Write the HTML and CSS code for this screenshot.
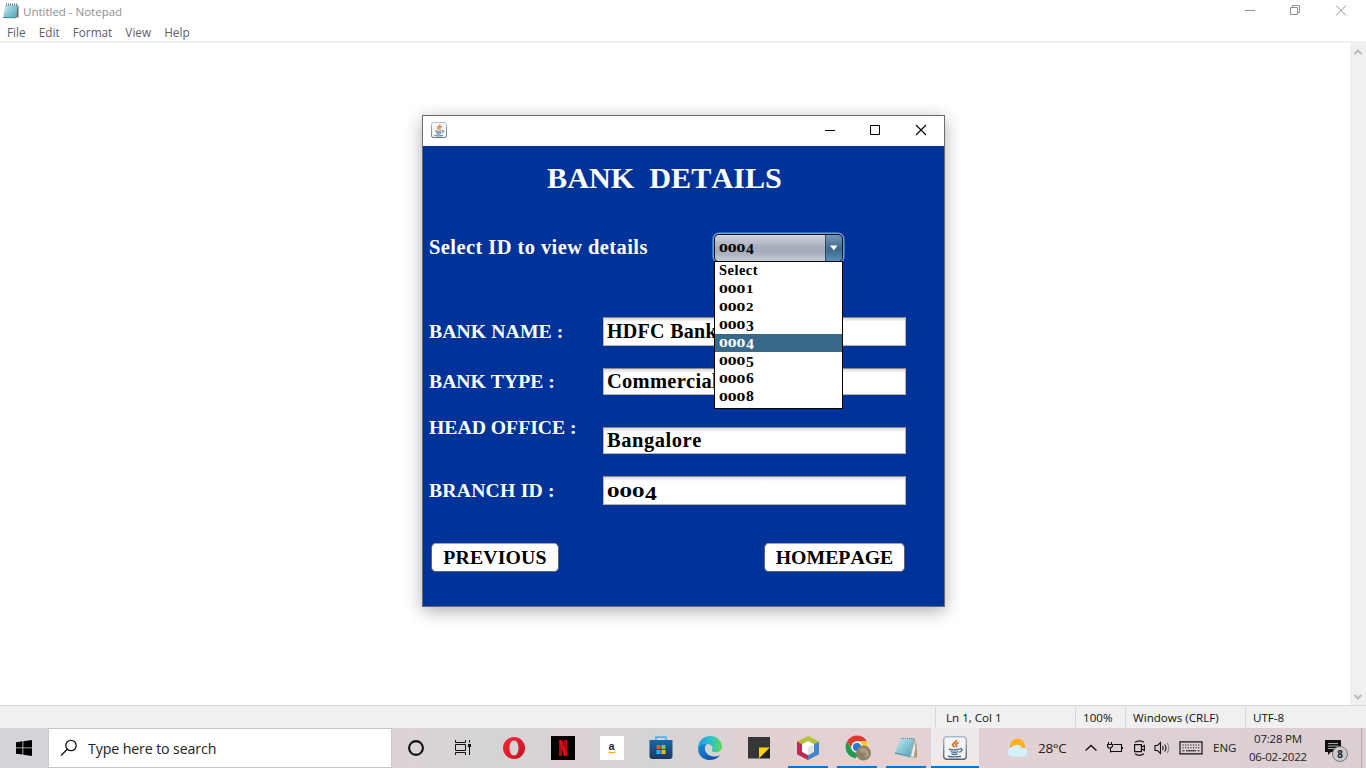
FILE: index.html
```
<!DOCTYPE html>
<html lang="en">
<head>
<meta charset="utf-8">
<title>Untitled - Notepad</title>
<link rel="stylesheet" href="styles.css">
</head>
<body>
<svg width="0" height="0" class="defs">
  <defs>
    <linearGradient id="pad" x1="0" y1="0" x2="1" y2="1"><stop offset="0" stop-color="#c9eaf0"/><stop offset="1" stop-color="#4ea3b8"/></linearGradient>
    <linearGradient id="frame" x1="0" y1="0" x2="0" y2="1"><stop offset="0" stop-color="#a9bccb"/><stop offset="1" stop-color="#4a6478"/></linearGradient>
    <linearGradient id="edgeA" x1="0" y1="0" x2="1" y2="0"><stop offset="0" stop-color="#1b9de2"/><stop offset=".55" stop-color="#2fc2c8"/><stop offset="1" stop-color="#62d84e"/></linearGradient>
    <linearGradient id="edgeB" x1="0" y1="0" x2="1" y2="1"><stop offset="0" stop-color="#1b8fdc"/><stop offset="1" stop-color="#0c4a9c"/></linearGradient>
    <linearGradient id="store" x1="0" y1="0" x2="0" y2="1"><stop offset="0" stop-color="#1767a8"/><stop offset="1" stop-color="#1c3766"/></linearGradient>
    <linearGradient id="opera" x1="0" y1="0" x2="1" y2="1"><stop offset="0" stop-color="#ff2a3c"/><stop offset="1" stop-color="#c00f20"/></linearGradient>
    <symbol id="java" viewBox="0 0 24 24">
      <rect x=".7" y=".7" width="22.6" height="22.6" rx="3" fill="#f4f5f6" stroke="url(#frame)" stroke-width="1.4"/>
      <path d="M13.200 4c1.300 2.300-4.600 3-3.400 5.300.5.900 1.300 1.100 1.700 2M16 6.500c-2.500.8-3.800 1.900-2.600 3 .7.700.2 1.300-.5 1.800" fill="none" stroke="#e8702a" stroke-width="1.800"/>
      <path d="M6 13.200q5 1.300 9.800 0M7.500 15.700q4 1.200 8 0M8.500 18q3 .9 6 0M16.300 13c3.600-1 3.800 2.200 0 3.300M5 20.300q6.500 1.200 13 0" fill="none" stroke="#4f7290" stroke-width="1.400"/>
    </symbol>
  </defs>
</svg>
<div class="desktop">
  <header class="titlebar">
    <svg class="pad-icon" width="18" height="18" viewBox="0 0 18 18"><path d="M3.500 3h12l-1.500 12.500H1.200z" fill="url(#pad)"/><path d="M15.500 3l1 .5v12l-2.500-.2z" fill="#5b7078"/><path d="M1 15.500l13.200.3" stroke="#3a8294"/><path d="M4 2.500h12" stroke="#5c777e" stroke-width="2" stroke-dasharray="1 1"/></svg>
    <span class="title">Untitled - Notepad</span>
    <svg class="controls" width="110" height="20" viewBox="0 0 110 20" fill="none" stroke="#919191"><path d="M5 10.500h10M50.500 7.500h7v7h-7zM52.500 7.500v-2h7v7h-2"/><path d="M96 5.500l10 10M106 5.500l-10 10" stroke-width="1"/></svg>
  </header>
  <nav class="menu"><span>File</span><span>Edit</span><span>Format</span><span>View</span><span>Help</span></nav>
  <main class="editor">
    <div class="scroll">
      <svg width="10" height="8" viewBox="0 0 10 8"><path d="M1.500 6L5 2.500 8.500 6" fill="none" stroke="#b9b9b9" stroke-width="2"/></svg>
      <svg width="10" height="8" viewBox="0 0 10 8"><path d="M1.500 2L5 5.500 8.500 2" fill="none" stroke="#b9b9b9" stroke-width="2"/></svg>
    </div>
  </main>
  <footer class="status"><span class="s1">Ln 1, Col 1</span><span class="s2">100%</span><span class="s3">Windows (CRLF)</span><span class="s4">UTF-8</span></footer>
  <div class="taskbar">
    <div class="start"><svg width="16" height="16" viewBox="0 0 16 16"><path d="M0 2.200L6.500 1.300v6.200H0zM7.300 1.200L16 0v7.500H7.300zM0 8.300h6.500v6.200L0 13.700zM7.300 8.300H16V16l-8.700-1.300z"/></svg></div>
    <div class="search"><svg width="18" height="18" viewBox="0 0 18 18" fill="none" stroke="#111" stroke-width="1.300"><circle cx="11" cy="6.500" r="5.200"/><path d="M7.300 10.300L1 16.500"/></svg><span>Type here to search</span></div>
    <div class="apps">
      <div class="app cortana"><svg width="24" height="24" viewBox="0 0 24 24"><circle cx="12" cy="12" r="6.900" fill="none" stroke="#111" stroke-width="2.100"/></svg></div>
      <div class="app task"><svg width="24" height="24" viewBox="0 0 24 24" fill="none" stroke="#111"><path d="M4.500 4v2.500h10V4M4.500 19v-2.500h10V19M4.500 8.500h10v6h-10zM18.500 4v2.500M18.500 11v8"/><path d="M17 8h3v3h-3z" fill="#111" stroke="none"/></svg></div>
      <div class="app"><svg width="24" height="24" viewBox="0 0 24 24"><path fill-rule="evenodd" d="M12 1a11 11 0 1 0 0 22 11 11 0 1 0 0-22zm0 3.500c3 0 4.500 3.500 4.500 7.500S15 19.500 12 19.500 7.500 16 7.500 12 9 4.500 12 4.500z" fill="url(#opera)"/></svg></div>
      <div class="app"><svg width="24" height="24" viewBox="0 0 24 24"><path d="M0 0h24v24H0z"/><path d="M8 4h3v16H8zM13 4h3v16h-3z" fill="#b20710"/><path d="M8 4h3l5 16h-3z" fill="#e50914"/></svg></div>
      <div class="app"><div class="amazon">a<svg width="8" height="3" viewBox="0 0 8 3"><path d="M.5 1q3.500 1.500 7-.2" fill="none" stroke="#f90" stroke-width="1.100"/></svg></div></div>
      <div class="app"><svg width="24" height="24" viewBox="0 0 24 24"><path d="M7 5V1.200h10V5" fill="none" stroke="#43b9ed" stroke-width="1.700"/><path d="M.5 4h23v16q0 3-3 3h-17q-3 0-3-3z" fill="url(#store)"/><path d="M7.500 9h4v4h-4z" fill="#f1511b"/><path d="M12.500 9h4v4h-4z" fill="#80cc28"/><path d="M7.500 14h4v4h-4z" fill="#28b4f0"/><path d="M12.500 14h4v4h-4z" fill="#fbbc09"/></svg></div>
      <div class="app"><svg width="24" height="24" viewBox="0 0 24 24"><path d="M.3 10C1.500 3.700 6.300 0 12 0c7 0 12 5 12 10.200 0 4-3 6-6.300 6-2.800 0-4.200-1-3.700-2.300 1.600-3-1-6-4.800-6C5.500 7.900 1.500 10 .3 14z" fill="url(#edgeA)"/><path d="M.3 12.500C1 9 5 7.500 9 8c-2.500 2-3 6-.5 9 2.600 3.600 8.500 4.700 13.500 2-2.200 3.300-6 5-10 5C5.500 24-.5 19 .3 12.500z" fill="url(#edgeB)"/></svg></div>
      <div class="app"><svg width="24" height="24" viewBox="0 0 24 24"><path d="M1 1h22v10.500L12 22.500H1z" fill="#363636"/><path d="M12 11.500h11l-11 11z" fill="#ffd500"/><path d="M23 11.500v11H12z" fill="#222"/></svg></div>
      <div class="app open"><svg width="24" height="24" viewBox="0 0 24 24"><path d="M12 0l11 5.500v12.800L12 24 1 18.300V5.500z" fill="#b3c43c"/><path d="M1 5.500l5 2.700v7.500L12 19v5L1 18.300z" fill="#b92d54"/><path d="M23 5.500v12.800L12 24v-5l6-3.300V8.200z" fill="#4784cb"/><path d="M12 5l6 3.200v7.500L12 19l-6-3.300V8.200z" fill="#fff"/><path d="M12 11.500l6-3.300v7.500L12 19z" fill="#dfe5e8"/></svg></div>
      <div class="app open chrome"><svg width="26" height="26" viewBox="0 0 26 26"><circle cx="12" cy="12" r="11.500" fill="#fff"/><path d="M2 6.300A11.500 11.500 0 0 1 22 6.300H12A5.700 5.700 0 0 0 6.900 14.500z" fill="#dc3b2e"/><path d="M2 6.300l5 8.500q2.300 3.500 6.500 3L11 23.500A11.500 11.500 0 0 1 2 6.300z" fill="#249c50"/><path d="M12 6.300h10q3 6-1 12l-9 5 5.500-9z" fill="#fcc934"/><circle cx="12" cy="12" r="5.500" fill="#fff"/><circle cx="12" cy="12" r="4.200" fill="#3077dd"/><circle cx="18.500" cy="18" r="7.500" fill="#8d8068"/><path d="M14 14q6-4 9 2t-3 7q2-7-4-5z" fill="#a99b80"/></svg></div>
      <div class="app open"><svg width="24" height="24" viewBox="0 0 24 24"><path d="M18 2l3 2 2 18-4.500-2z" fill="#b59869"/><path d="M7 2h13l-3.500 18L1 16.800z" fill="url(#pad)"/><path d="M20.500 3L22.500 19.500l-3 2-3-1z" fill="#e9eeee" stroke="#7b8a8b" stroke-width=".5"/><path d="M22.300 7l.7 13-3.500 2z" fill="#b59869"/><path d="M7 2.500h13" stroke="#67848d" stroke-dasharray="1 1"/><path d="M1 17L16.500 20.800" stroke="#39899d"/></svg></div>
      <div class="app open active"><svg width="24" height="24"><use href="#java"/></svg></div>
    </div>
    <div class="tray">
      <svg class="weather" width="22" height="20" viewBox="0 0 22 20"><circle cx="10.500" cy="8" r="7.500" fill="#fdb01b"/><path d="M5 18.700a4.700 4.700 0 0 1-.5-9.200 6 6 0 0 1 10.500.8 4.300 4.300 0 1 1 1.500 8.400z" fill="#d5effb"/></svg>
      <span class="temp">28°C</span>
      <svg class="caret" width="14" height="8" viewBox="0 0 14 8"><path d="M1.500 6.500L7 1.500l5.500 5" fill="none" stroke="#111" stroke-width="1.300"/></svg>
      <svg class="battery" width="17" height="14" viewBox="0 0 17 14" fill="none" stroke="#111" stroke-width="1.100"><path d="M7.500 3.500h8v7H5M4.500 7v4.500M2.500 1v2M5.500 1v2M1.500 3.500h5V5Q6 7 4 7 1.500 7 1.500 5zM16.500 6v2"/></svg>
      <svg class="cam" width="13" height="16" viewBox="0 0 13 16" fill="none" stroke="#111" stroke-width="1.200"><path d="M1.600 4.600h6.800v7H1.600zM8.400 7l3-1.500v5l-3-1.500M2 2.300q4.500-3 9 0M2 13.800q4.500 3 9 0"/></svg>
      <svg class="sound" width="17" height="14" viewBox="0 0 17 14" fill="none" stroke="#111" stroke-width="1.100"><path d="M1 4.500h2.500l3-3v11l-3-3H1zM8.500 5q1.500 2 0 4M10.500 3.500q3 3.500 0 7"/><path d="M13 2q4 5 0 10" stroke="#888"/></svg>
      <svg class="keyboard" width="24" height="14" viewBox="0 0 24 14" fill="none" stroke="#111"><path d="M1 .8h22v12H1z" stroke-width="1.200"/><path d="M3.500 4h18M3.500 6.800h18" stroke-dasharray="1.200 1.400"/><path d="M3.500 9.800h2M7 9.800h10M18.500 9.800h2"/></svg>
      <span class="lang">ENG</span>
      <div class="clock"><span>07:28 PM</span><span>06-02-2022</span></div>
      <div class="notify"><svg width="17" height="16" viewBox="0 0 17 16"><path d="M0 0h16v12H6l-3 3v-3H0z" fill="#111"/><path d="M3 3.500h10M3 6h10M3 8.500h10" stroke="#aaa"/></svg><b class="badge">8</b></div>
      <i class="edge"></i>
    </div>
  </div>

  <section class="window">
    <div class="wbar"><svg width="16" height="16"><use href="#java"/></svg>
      <svg class="wcontrols" width="110" height="14" viewBox="0 0 110 14" fill="none" stroke="#000"><path d="M4 7.500h10M49.500 2.500h9v9h-9z"/><path d="M95 2l10 10M105 2L95 12" stroke-width="1.100"/></svg></div>
    <div class="form">
      <h1>BANK&nbsp; DETAILS</h1>
      <div class="row r-select"><label class="lower">Select ID to view details</label>
        <div class="combo"><div class="value"><span class="num"><span class="zeros">000</span><span class="down">4</span></span></div><div class="arrow"><svg width="8" height="6" viewBox="0 0 8 6"><path d="M0 .5h7.500L3.800 5.500z" fill="#fff"/></svg></div>
          <ul class="list">
            <li><span class="word">Select</span></li>
            <li><span class="num"><span class="zeros">000</span><span class="short">1</span></span></li>
            <li><span class="num"><span class="zeros">000</span><span class="short">2</span></span></li>
            <li><span class="num"><span class="zeros">000</span><span class="down">3</span></span></li>
            <li class="on"><span class="num"><span class="zeros">000</span><span class="down">4</span></span></li>
            <li><span class="num"><span class="zeros">000</span><span class="down">5</span></span></li>
            <li><span class="num"><span class="zeros">000</span><span class="tall">6</span></span></li>
            <li><span class="num"><span class="zeros">000</span><span class="tall">8</span></span></li>
          </ul>
        </div>
      </div>
      <div class="row r-name"><label>BANK NAME :</label><div class="field hdfc">HDFC Bank</div></div>
      <div class="row r-type"><label>BANK TYPE :</label><div class="field comm">Commercial</div></div>
      <div class="row r-office"><label>HEAD OFFICE :</label><div class="field bang">Bangalore</div></div>
      <div class="row r-branch"><label>BRANCH ID :</label><div class="field"><span class="num big"><span class="zeros">000</span><span class="down">4</span></span></div></div>
      <div class="buttons"><button class="prev">PREVIOUS</button><button class="home">HOMEPAGE</button></div>
    </div>
  </section>
</div>
</body>
</html>
```
FILE: styles.css
```
* { box-sizing: border-box; }
body { margin: 0; overflow: hidden; font-family: "Open Sans", "Noto Sans", sans-serif; font-size: 12px; }
.defs { position: absolute; }
svg { flex: none; display: block; }
.desktop { position: relative; width: 1366px; height: 768px; background: #fff; display: flex; flex-direction: column; }
.titlebar { height: 22px; display: flex; align-items: center; padding: 0 16px 0 2px; color: #919191; }
.title { font-size: 11.6px; margin-left: 3px; flex: 1; letter-spacing: -.05px; }
.controls { margin-top: -2px; }
.menu { height: 21px; display: flex; gap: 13px; padding-left: 7px; color: #60606a; font-size: 11.8px; line-height: 20px; }
.editor { height: 664px; margin-top: -2px; border-top: 2px solid #f0f0f0; display: flex; justify-content: flex-end; }
.scroll { width: 16px; background: #f0f0f0; display: flex; flex-direction: column; justify-content: space-between; align-items: center; padding: 5px 0 4px; }
.status { height: 23px; background: #f0f0f0; border-top: 1px solid #d7d7d7; display: flex; justify-content: flex-end; font-size: 11.6px; line-height: 21px; color: #111; }
.status span { height: 20px; margin-top: 1px; border-left: 1px solid #d7d7d7; }
.s1 { width: 140px; padding-left: 10px; }
.s2 { width: 50px; padding-left: 7px; }
.s3 { width: 120px; padding-left: 7px; }
.s4 { width: 121px; padding-left: 7px; }
.taskbar { height: 40px; display: flex; background: linear-gradient(90deg, #d4d3d8 0, #d4d3d8 48px, #ddd3d5 400px, #d4d4d4 490px, #dcd2d4 570px, #d4d4d4 660px, #e3d0d2 790px, #e3d1d4 930px, #ded1d4 1100px, #dccfd3 100%); color: #222; }
.start { width: 48px; display: flex; align-items: center; justify-content: center; }
.search { width: 344px; background: #fff; border: 1px solid #c8c8ca; display: flex; align-items: center; gap: 10px; padding-left: 11px; font-size: 14.2px; letter-spacing: -.12px; }
.apps { display: flex; width: 588px; }
.app { width: 49px; display: flex; align-items: center; justify-content: center; position: relative; flex: none; }
.app.cortana { width: 48px; padding-right: 1px; }
.task { padding-right: 3px; }
.chrome { padding-left: 2px; }
.open::after { content: ""; position: absolute; left: 5px; right: 4px; bottom: 0; height: 2px; background: #0078d7; }
.active { width: 48px; margin-left: 1px; background: #f0e9eb; }
.active::after { left: 0; right: 0; }
.amazon { width: 24px; height: 24px; background: #fff; font: bold 11px/13px "Liberation Sans", sans-serif; padding-top: 4px; display: flex; flex-direction: column; align-items: center; color: #232f3e; }
.amazon svg { margin-top: -2px; }
.tray { flex: 1; display: flex; align-items: center; }
.weather { margin-left: 27px; }
.temp { width: 46px; margin-left: 9px; font-size: 13.5px; letter-spacing: -.3px; }
.battery { margin-left: 8px; }
.cam { margin-left: 10px; }
.sound { margin-left: 8px; }
.keyboard { margin-left: 8px; }
.lang { width: 34px; margin-left: 10px; font-size: 11.5px; margin-top: -2px; }
.clock { width: 62px; display: flex; flex-direction: column; align-items: center; font-size: 11.5px; line-height: 18px; letter-spacing: -.2px; white-space: nowrap; margin-top: -1px; }
.notify { position: relative; margin-left: 16px; width: 36px; }
.badge { position: absolute; left: 7px; top: 6px; width: 16px; height: 16px; border-radius: 50%; border: 1px solid #777; background: #ccc9cc; font-size: 10px; line-height: 14px; text-align: center; }
.edge { width: 1px; height: 40px; background: #b4a9ad; }

.window { position: absolute; left: 422px; top: 115px; width: 523px; height: 492px; border: 1px solid #6c6c6c; box-shadow: 0 4px 16px rgba(0,0,0,.32); background: #039; display: flex; flex-direction: column; font-family: "Liberation Serif", serif; font-weight: bold; font-kerning: none; }
.wbar { height: 30px; flex: none; background: #fff; display: flex; align-items: center; justify-content: space-between; padding: 0 13px 2px 8px; }
.form { flex: 1; color: #fff; display: flex; flex-direction: column; }
h1 { margin: 14px 0 0 124px; font-size: 30.2px; line-height: 36px; height: 37px; white-space: pre; }
.row { display: flex; padding-left: 6px; font-size: 19.7px; }
label { width: 174px; line-height: 28px; white-space: nowrap; letter-spacing: .1px; }
.lower { width: 285px; font-size: 20.5px; letter-spacing: .42px; }
.r-select { margin-top: 36px; height: 29px; }
.r-name { margin-top: 55px; }
.r-type { margin-top: 22px; height: 28px; }
.r-type label { line-height: 26px; letter-spacing: 0; }
.r-office { margin-top: 17px; }
.r-office label { letter-spacing: 0; }
.r-branch { margin-top: 22px; }
.r-branch label { letter-spacing: .2px; }
.field { width: 303px; height: 29px; background: linear-gradient(#d8d8d8, #fff 4px); border: 1px solid #b4b4b4; border-top-color: #8a8a8a; color: #000; line-height: 27px; padding-left: 3px; }
.hdfc { font-size: 20px; letter-spacing: .3px; }
.comm { font-size: 20.5px; letter-spacing: .28px; }
.bang { font-size: 20.5px; letter-spacing: .55px; margin-top: 14px; }
.r-type .field, .r-office .field { height: 27px; line-height: 25px; }
.buttons { display: flex; justify-content: space-between; padding: 0 39px 0 8px; margin-top: 38px; }
button { height: 29px; padding: 0; border: 1px solid #5d6470; border-top-color: #a0a4b0; border-radius: 5px; background: #fff; color: #000; font: bold 19.8px/27px "Liberation Serif", serif; font-kerning: none; }
.prev { width: 128px; letter-spacing: .15px; }
.home { width: 141px; }
.combo { position: relative; width: 129px; height: 28px; margin-top: 1px; border: 1px solid #111; border-radius: 5px; box-shadow: 0 0 0 1.500px #6ba0dc; display: flex; color: #000; }
.value { flex: 1; padding-left: 4px; background: linear-gradient(#d2d4de, #a9afbc 45%, #a4abb9 65%, #c6ccda); border-radius: 4px 0 0 4px; display: flex; align-items: center; }
.arrow { width: 17px; border-left: 1px solid #2c4a64; background: linear-gradient(#7897b4, #3c698c 55%, #5b91b8); border-radius: 0 4px 4px 0; display: flex; align-items: center; justify-content: center; }
.list { position: absolute; z-index: 2; left: -1px; top: 26px; width: 129px; height: 148px; margin: 0; padding: 0; list-style: none; border: 1px solid #000; background: #fff; font-size: 14.5px; letter-spacing: .45px; }
.list li { height: 18px; line-height: 18px; padding-left: 4px; display: flex; align-items: center; }
.list .on { background: #39698a; color: #fff; }
.word { line-height: 16px; height: 18px; }
.num { display: flex; align-items: baseline; height: 18px; line-height: 18px; font-size: 14px; letter-spacing: 0; }
.zeros { width: 27px; font-family: "DejaVu Serif", serif; font-size: 10.500px; transform: scaleX(1.2); transform-origin: left; }
.short { font-size: 12px; transform: scaleX(1.25); transform-origin: left; }
.down { transform: translateY(2px) scaleX(1.12); transform-origin: left; }
.tall { transform: scaleX(1.12); transform-origin: left; }
.big { height: 27px; line-height: 27px; font-size: 19.7px; }
.big .zeros { width: 38px; font-size: 13px; transform: scaleX(1.38); }
.big .down { transform: translateY(3px) scaleX(1.2); }
```
